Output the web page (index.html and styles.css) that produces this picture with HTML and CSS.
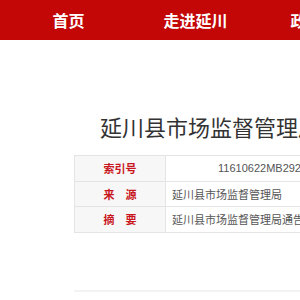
FILE: index.html
```html
<!DOCTYPE html>
<html lang="zh-CN">
<head>
<meta charset="utf-8">
<link rel="stylesheet" href="styles.css">
</head>
<body>
<div class="nav">
  <a class="nav-item">首页</a>
  <a class="nav-item">走进延川</a>
  <a class="nav-item">政务公开</a>
</div>
<div class="main">
  <h1 class="title">延川县市场监督管理局关于食品安全监督抽检信息的通告</h1>
  <table class="info">
    <tr>
      <td class="label">索引号</td>
      <td class="value value-code">11610622MB29253XXX/2023-00001</td>
    </tr>
    <tr>
      <td class="label">来　源</td>
      <td class="value">延川县市场监督管理局</td>
    </tr>
    <tr>
      <td class="label">摘　要</td>
      <td class="value">延川县市场监督管理局通告</td>
    </tr>
  </table>
  <div class="divider"></div>
</div>
</body>
</html>
```
FILE: styles.css
```css
html, body {
  margin: 0;
  padding: 0;
  background: #fff;
  overflow: hidden;
}
body {
  width: 300px;
  height: 300px;
  font-family: "Liberation Sans", "Noto Sans CJK SC", sans-serif;
}
.nav {
  height: 40px;
  background: #c30606;
  display: flex;
  padding-left: 5px;
  width: 1200px;
}
.nav-item {
  flex: 0 0 127px;
  text-align: center;
  color: #fff;
  font-weight: bold;
  font-size: 16px;
  line-height: 40px;
  font-family: "Noto Sans CJK SC", sans-serif;
  white-space: nowrap;
}
.main {
  padding-left: 74px;
  width: 1000px;
}
.title {
  margin: 71px 0 0 26px;
  font-size: 22px;
  line-height: 30px;
  font-weight: normal;
  color: #333;
  white-space: nowrap;
  font-family: "Noto Sans CJK SC", sans-serif;
}
.info {
  margin-top: 14px;
  border-collapse: collapse;
  width: 700px;
  font-size: 11px;
}
.info tr {
  height: 25.5px;
}
.info td {
  border: 1px solid #e4e4e4;
  padding: 0;
}
.label {
  width: 90px;
  background: #f7f7f7;
  color: #c8161d;
  font-weight: bold;
  text-align: center;
  font-family: "Noto Sans CJK SC", sans-serif;
}
.value {
  color: #555;
  padding-left: 6px !important;
  white-space: nowrap;
}
.value-code {
  padding-left: 52px !important;
}
.divider {
  margin-top: 57px;
  height: 2px;
  background: #f3f3f3;
}
```
